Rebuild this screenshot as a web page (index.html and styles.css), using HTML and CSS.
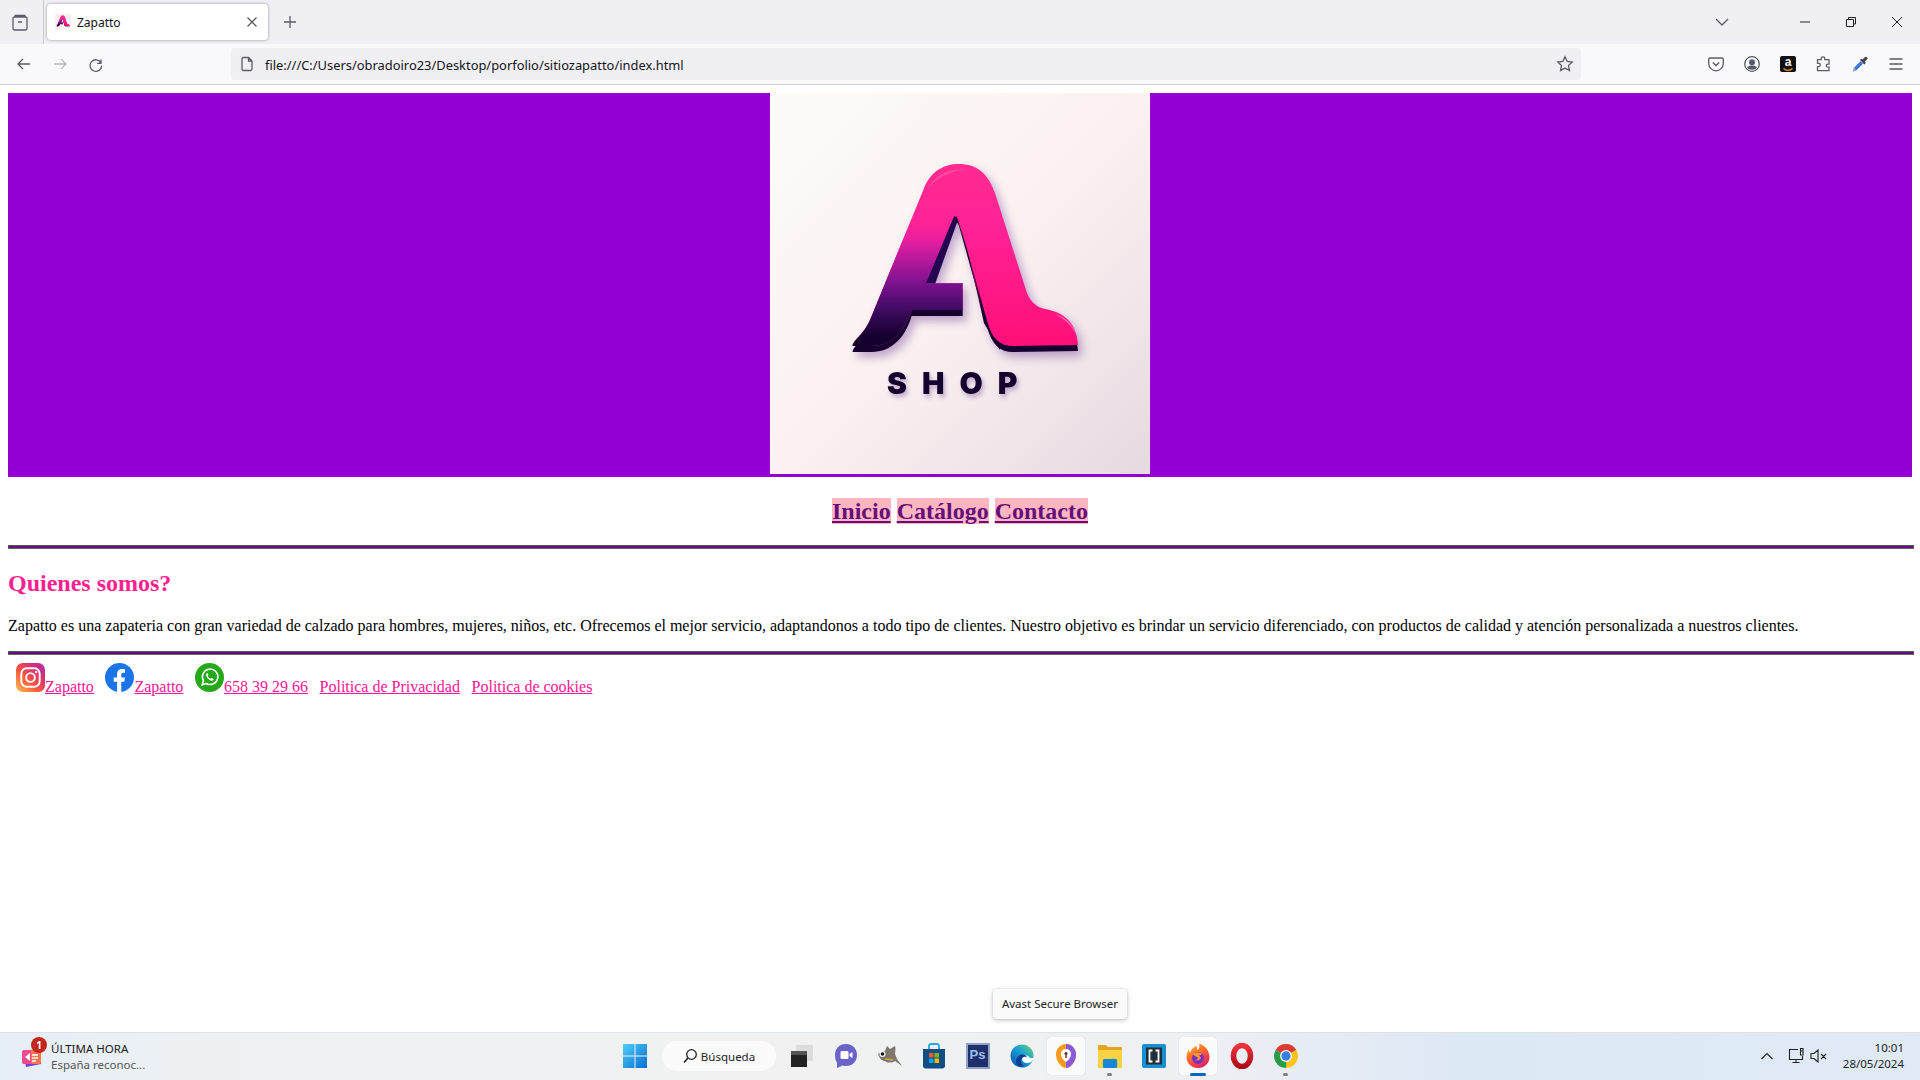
FILE: index.html
```html
<!DOCTYPE html>
<html lang="es">
<head>
  <meta charset="UTF-8" />
  <title>Zapatto</title>
  <link rel="stylesheet" href="styles.css">
</head>
<body>

  <!-- barra del navegador -->
  <div class="browser">
    <div class="tabbar">
      <div class="tab-list">
        <svg class="ico" width="20" height="20" viewBox="0 0 20 20"><path d="M4.500 3.500h11M3 6.500C3 5.600 3.600 5 4.500 5h11c.9 0 1.500.6 1.500 1.500v10c0 .9-.6 1.500-1.500 1.500h-11C3.600 18 3 17.400 3 16.500zM8 10h4"/></svg>
      </div>
      <div class="tab">
        <svg class="favicon" width="16" height="16" viewBox="200 150 820 820"><rect x="200" y="150" width="820" height="820" fill="#fbeeee"/><use href="#logo-a"/></svg>
        <span class="tab-title">Zapatto</span>
        <svg class="ico tab-close" width="16" height="16" viewBox="0 0 16 16"><path d="M3.500 3.500l9 9M12.500 3.500l-9 9"/></svg>
      </div>
      <svg class="ico new-tab" width="16" height="16" viewBox="0 0 16 16"><path d="M8 2v12M2 8h12"/></svg>
      <svg class="ico tab-menu" width="16" height="16" viewBox="0 0 16 16"><path d="M2 5l6 6 6-6"/></svg>
      <div class="win-btns">
        <svg class="ico-win" width="12" height="12" viewBox="0 0 12 12"><path d="M1 6h10"/></svg>
        <svg class="ico-win" width="12" height="12" viewBox="0 0 12 12"><path d="M3.500 3V1.500h7V8H9M1.500 3.500h7V10.500h-7z"/></svg>
        <svg class="ico-win" width="12" height="12" viewBox="0 0 12 12"><path d="M1 1l10 10M11 1L1 11"/></svg>
      </div>
    </div>
    <div class="toolbar">
      <button class="tool"><svg class="ico" width="18" height="18" viewBox="0 0 18 18"><path d="M15 9H3M8 4L3 9l5 5"/></svg></button>
      <button class="tool tool-off"><svg class="ico" width="18" height="18" viewBox="0 0 18 18"><path d="M3 9h12M10 4l5 5-5 5"/></svg></button>
      <button class="tool"><svg class="ico" width="18" height="18" viewBox="0 0 18 18"><path d="M14 4.500v3.800h-3.800M14 8a5.800 5.800 0 1 0 .6 2.500"/></svg></button>
      <div class="urlbar">
        <svg class="ico" width="16" height="16" viewBox="0 0 16 16"><path d="M3 3c0-.8.6-1.500 1.500-1.500H9.500L13 5v8c0 .8-.6 1.500-1.500 1.500h-7C3.600 14.500 3 13.800 3 13zM9.500 1.500V5H13"/></svg>
        <span class="url">file:///C:/Users/obradoiro23/Desktop/porfolio/sitiozapatto/index.html</span>
        <svg class="ico star" width="18" height="18" viewBox="0 0 18 18"><path d="M9 1.800l2.200 4.700 5 .6-3.700 3.500 1 5L9 13.100l-4.500 2.500 1-5L1.800 7.100l5-.6z"/></svg>
      </div>
      <div class="tool-right">
        <button class="tool"><svg class="ico" width="18" height="18" viewBox="0 0 18 18"><path d="M3 3h12c.8 0 1.300.5 1.300 1.300v4.200A7.300 7.300 0 0 1 9 15.800a7.300 7.300 0 0 1-7.300-7.300V4.300C1.700 3.500 2.200 3 3 3zM5.800 7.500L9 10.500l3.200-3"/></svg></button>
        <button class="tool"><svg class="ico" width="18" height="18" viewBox="0 0 18 18"><circle cx="9" cy="9" r="7.300"/><circle class="solid" cx="9" cy="7.300" r="3"/><path class="solid" d="M4 12.500c1-1.500 3-2 5-2s4 .5 5 2c-1.200 1.500-3 2.200-5 2.200s-3.800-.7-5-2.200z"/></svg></button>
        <button class="tool"><span class="amazon">a<svg width="10" height="4" viewBox="0 0 10 4"><path d="M.5.500C3 3 7 3 9.500.5" fill="none" stroke="#f90" stroke-width="1.200"/></svg></span></button>
        <button class="tool"><svg class="ico" width="18" height="18" viewBox="0 0 18 18"><path d="M8 1.800c1.200 0 1.800.9 1.800 1.800v1H14v4.600h-1c-1 0-1.700.6-1.700 1.500s.7 1.500 1.700 1.500h1v3.400H2.500v-4h1.200c1 0 1.700-.6 1.700-1.500S4.700 8.400 3.700 8.400H2.500V4.600h3.700v-1c0-.9.600-1.800 1.800-1.800z"/></svg></button>
        <button class="tool"><svg width="18" height="18" viewBox="0 0 18 18"><path d="M2 16.500l1-3.800 6.500-6.500 2.500 2.500-6.500 6.500z" fill="#3c78d8"/><path d="M2 16.500l1-3.800 2 2z" fill="#aab"/><path d="M9 5l1.500-1.500 1.200 1 2-2.200c.7-.7 1.800-.7 2.400 0s.6 1.700-.1 2.300l-2.200 2 1 1.300L13.300 9.500z" fill="#45464f"/></svg></button>
        <button class="tool"><svg class="ico" width="18" height="18" viewBox="0 0 18 18"><path d="M2.500 4h13M2.500 9h13M2.500 14h13"/></svg></button>
      </div>
    </div>
  </div>

  <!-- pagina -->
  <div class="page">
    <header class="site-header">
      <svg class="logo" width="380" height="381" viewBox="30 9 1140 1143">
        <defs>
          <linearGradient id="bg1" x1="0" y1="0" x2="1" y2="1">
            <stop offset="0" stop-color="#fcfbf7"/>
            <stop offset=".5" stop-color="#fbf1f1"/>
            <stop offset="1" stop-color="#e6dae1"/>
          </linearGradient>
          <linearGradient id="pinkBody" x1="0" y1="0" x2="0" y2="1">
            <stop offset="0" stop-color="#ff2a90"/>
            <stop offset=".35" stop-color="#ff2296"/>
            <stop offset="1" stop-color="#ff0f78"/>
          </linearGradient>
          <linearGradient id="darkLeg" gradientUnits="userSpaceOnUse" x1="0" y1="380" x2="0" y2="740">
            <stop offset="0" stop-color="#ff2296" stop-opacity="0"/>
            <stop offset=".22" stop-color="#e01ea2"/>
            <stop offset=".55" stop-color="#7d1290"/>
            <stop offset=".78" stop-color="#3e0a60"/>
            <stop offset="1" stop-color="#14002e"/>
          </linearGradient>
          <linearGradient id="innerEdge" gradientUnits="userSpaceOnUse" x1="0" y1="385" x2="0" y2="660">
            <stop offset="0" stop-color="#f01a86"/>
            <stop offset=".55" stop-color="#8c0f5e"/>
            <stop offset="1" stop-color="#16002f"/>
          </linearGradient>
          <path id="a-body" d="M278 765C285 745 310 735 330 690L490 300C510 245 550 222 597 222C650 222 685 250 705 310L795 590C805 630 825 650 855 657C915 668 950 700 954 765L760 768C720 768 695 745 682 695L597 390C592 376 585 376 578 390L498 580H608V660H455C435 725 395 768 335 768H278Z"/>
          <g id="logo-a">
            <use href="#a-body" y="18" fill="#16002f"/>
            <path d="M590 380L625 490 672 700 720 780 740 700 640 400Z" fill="url(#innerEdge)"/>
            <use href="#a-body" fill="url(#pinkBody)"/>
            <path d="M278 765C285 745 310 735 330 690L490 300 C510 270 540 340 578 390L498 580H608V660H455C435 725 395 768 335 768H278Z" fill="url(#darkLeg)"/>
            <path d="M583 378L498 580H526L592 395Z" fill="#230552"/>
            <path d="M500 298C530 250 570 234 620 240 575 240 530 262 500 298Z" fill="#ff6bb0" opacity=".5"/>
            <path d="M885 672C915 680 940 700 948 735 935 705 912 688 885 672Z" fill="#ff6bb0" opacity=".8"/>
          </g>
        </defs>
        <rect x="30" y="9" width="1140" height="1143" fill="url(#bg1)"/>
        <use class="logo-shadow" href="#logo-a"/>
        <text class="logo-shop" x="381" y="911">SHOP</text>
      </svg>
    </header>

    <nav class="menu">
      <a href="#">Inicio</a>
      <a href="#">Catálogo</a>
      <a href="#">Contacto</a>
    </nav>

    <hr>

    <section class="about">
      <h2>Quienes somos?</h2>
      <p>Zapatto es una zapateria con gran variedad de calzado para hombres, mujeres, niños, etc. Ofrecemos el mejor servicio, adaptandonos a todo tipo de clientes. Nuestro objetivo es brindar un servicio diferenciado, con productos de calidad y atención personalizada a nuestros clientes.</p>
    </section>

    <hr>

    <footer class="site-footer">
      <span class="foot-item">
        <svg class="social" width="29" height="29" viewBox="0 0 30 30">
          <defs>
            <linearGradient id="igGrad" x1="0" y1="1" x2="1" y2="0">
              <stop offset="0" stop-color="#fdc04f"/>
              <stop offset=".4" stop-color="#f9583f"/>
              <stop offset=".75" stop-color="#d62e78"/>
              <stop offset="1" stop-color="#a82fb4"/>
            </linearGradient>
          </defs>
          <rect width="30" height="30" rx="7" fill="url(#igGrad)"/>
          <rect x="5.500" y="5.500" width="19" height="19" rx="5.500" fill="none" stroke="#fff" stroke-width="2"/>
          <circle cx="15" cy="15" r="4.500" fill="none" stroke="#fff" stroke-width="2"/>
          <circle cx="20.800" cy="9.200" r="1.300" fill="#fff"/>
        </svg><a href="#">Zapatto</a>
      </span>
      <span class="foot-item">
        <svg class="social" width="29" height="29" viewBox="0 0 30 30">
          <circle cx="15" cy="15" r="15" fill="#1b74e8"/>
          <path d="M12.500 30V19.500H9V15h3.500v-3.200c0-3.600 2.100-5.500 5.300-5.500 1.500 0 2.900.3 2.900.3v3.400H19c-1.700 0-2.200 1-2.200 2.100V15h3.800l-.6 4.500h-3.200V30z" fill="#fff"/>
        </svg><a href="#">Zapatto</a>
      </span>
      <span class="foot-item">
        <svg class="social" width="29" height="29" viewBox="0 0 30 30">
          <circle cx="15" cy="15" r="15" fill="#26a81a"/>
          <path d="M7.500 22.500l1.200-4.300a8 8 0 1 1 3 3z" fill="none" stroke="#fff" stroke-width="1.600"/>
          <path d="M12.300 10.500c-.7.500-1 1.300-.8 2.200.5 2.500 2.800 5 5.500 5.600.9.200 1.800-.2 2.200-1 .2-.4 0-.7-.3-.9l-1.500-.8c-.3-.1-.6 0-.8.200l-.5.600c-1.300-.5-2.400-1.600-3-2.900l.5-.5c.2-.2.300-.5.200-.8l-.7-1.500c-.2-.4-.5-.4-.8-.2z" fill="#fff"/>
        </svg><a href="#">658 39 29 66</a>
      </span>
      <span class="foot-item"><a href="#">Politica de Privacidad</a></span>
      <span class="foot-item"><a href="#">Politica de cookies</a></span>
    </footer>
  </div>

  <div class="tooltip">Avast Secure Browser</div>

  <!-- barra de tareas -->
  <div class="taskbar">
    <div class="news">
      <div class="news-icon">
        <svg width="24" height="22" viewBox="0 0 24 22">
          <path d="M3 6l15-2 3 13-15 3z" fill="#7a3fd8"/>
          <rect x="2" y="3" width="19" height="14" rx="2" fill="#ee4a8e"/>
          <rect x="11" y="3" width="10" height="14" rx="2" fill="#f7774d"/>
          <path d="M5 10l5-4v8z" fill="#fff"/>
          <path d="M12 8h6M12 11h6M12 14h4" stroke="#fff" stroke-width="1.300"/>
        </svg>
        <span class="badge">1</span>
      </div>
      <div class="news-text">
        <div class="news-title">ÚLTIMA HORA</div>
        <div class="news-sub">España reconoc...</div>
      </div>
    </div>

    <div class="apps">
      <div class="app">
        <svg width="24" height="24" viewBox="0 0 24 24">
          <defs><linearGradient id="winG" x1="0" y1="0" x2="1" y2="1"><stop offset="0" stop-color="#4fcdf7"/><stop offset="1" stop-color="#0a6fd0"/></linearGradient></defs>
          <path d="M0 0h11.500v11.500H0zM12.500 0H24v11.500H12.500zM0 12.500h11.500V24H0zM12.500 12.500H24V24H12.500z" fill="url(#winG)"/>
        </svg>
      </div>
      <div class="search">
        <svg width="16" height="16" viewBox="0 0 16 16"><circle cx="9.500" cy="6.500" r="4.800" fill="none" stroke="#222" stroke-width="1.300"/><path d="M6 10l-4 4.500" stroke="#222" stroke-width="1.600"/></svg>
        <span>Búsqueda</span>
      </div>
      <div class="app">
        <svg width="24" height="24" viewBox="0 0 24 24"><rect x="6" y="1" width="17" height="16" fill="#dcdcdc"/><rect x="1" y="7" width="16" height="16" fill="#222"/><rect x="1" y="7" width="16" height="4" fill="#555"/></svg>
      </div>
      <div class="app">
        <svg width="24" height="26" viewBox="0 0 24 26"><path d="M12 1c6.500 0 11 4.500 11 11s-4.500 11-11 11c-1.200 0-2.500-.2-3.500-.6L3 25v-5.500C1.700 17.500 1 15 1 12 1 5.500 5.500 1 12 1z" fill="#6c63c9"/><rect x="6.500" y="8" width="8" height="8" rx="1.500" fill="#fff"/><path d="M15.500 11l3-2v6l-3-2z" fill="#fff"/></svg>
      </div>
      <div class="app">
        <svg width="26" height="22" viewBox="0 0 26 22"><path d="M1 9c2-2 5-3 7-3l2-5 3 3 5-3c1 3 0 6 0 8l2 5 5 7-7-5c-3 2-8 2-10 0-3 0-5-2-7-7z" fill="#7e776c"/><circle cx="5.500" cy="9" r="3" fill="#fff"/><circle cx="5.500" cy="9" r="1.800" fill="#111"/><path d="M8 14l8 1" stroke="#d9a441" stroke-width="1.500"/></svg>
      </div>
      <div class="app">
        <svg width="24" height="26" viewBox="0 0 24 26"><path d="M7 7V3c0-1 .7-2 2-2h6c1.300 0 2 1 2 2v4" fill="none" stroke="#2aa5e0" stroke-width="1.800"/><path d="M1 6h22v17c0 1.500-1 2.500-2.500 2.500h-17C2 25.500 1 24.500 1 23z" fill="#134d86"/><rect x="7" y="10" width="4.500" height="4.500" fill="#ef5a2a"/><rect x="12.500" y="10" width="4.500" height="4.500" fill="#7fba00"/><rect x="7" y="15.500" width="4.500" height="4.500" fill="#00a4ef"/><rect x="12.500" y="15.500" width="4.500" height="4.500" fill="#ffb900"/></svg>
      </div>
      <div class="app">
        <div class="ps-icon">Ps</div>
      </div>
      <div class="app">
        <svg width="24" height="24" viewBox="0 0 24 24">
          <defs><linearGradient id="edgeG" x1="0" y1="1" x2="1" y2="0"><stop offset="0" stop-color="#0b4fa8"/><stop offset=".55" stop-color="#1aa0d8"/><stop offset="1" stop-color="#6ad86a"/></linearGradient></defs>
          <circle cx="12" cy="12" r="11.500" fill="url(#edgeG)"/>
          <path d="M24 14c-1 3-4 5-7 5-3 0-5-2-5-4s2-3.500 4-3.500c1.800 0 3.500 1 3.500 2.500h4.400" fill="#fff"/>
          <path d="M8 22c-3-3-3-9 2-11 3-1 6 0 7 2-3-1-6 1-6 4 0 2 1 4 3 5-2 1-4 1-6 0z" fill="#0a3f94"/>
        </svg>
      </div>
      <div class="app app-hl">
        <svg width="24" height="26" viewBox="0 0 24 26"><path d="M12 1c5.500 0 9 4 10 9 .6 6-4 15-10 15S1.400 16 2 10C3 5 6.500 1 12 1z" fill="#f59a1c"/><path d="M12 1c5.500 0 9 4 10 9 .6 6-4 15-10 15z" fill="#8a5ad8"/><path d="M12 6c3 0 5 2 5 5s-2 6-5 8c-3-2-5-5-5-8s2-5 5-5z" fill="#fff"/><circle cx="12" cy="10.500" r="1.500" fill="#534"/><rect x="11.300" y="11" width="1.400" height="4" fill="#534"/></svg>
      </div>
      <div class="app app-open">
        <svg width="24" height="24" viewBox="0 0 24 24"><path d="M0 2c0-.6.400-1 1-1h7l2 2h13c.6 0 1 .4 1 1v4H0z" fill="#e5a51d"/><path d="M0 6h24v17c0 .6-.4 1-1 1H1c-.6 0-1-.4-1-1z" fill="#fbd245"/><rect x="5" y="15" width="14" height="9" rx="1" fill="#1788d6"/></svg>
      </div>
      <div class="app">
        <svg width="24" height="24" viewBox="0 0 24 24"><rect width="24" height="24" rx="2" fill="#1a8fd0"/><rect x="4" y="3.500" width="16" height="17" fill="#22303c"/><path d="M10.500 6.500H7.500v11h3M13.500 6.500h3v11h-3" fill="none" stroke="#fff" stroke-width="1.800"/></svg>
      </div>
      <div class="app app-hl app-active">
        <svg width="26" height="26" viewBox="0 0 26 26">
          <defs><linearGradient id="foxG" x1="0" y1="0" x2=".6" y2="1"><stop offset="0" stop-color="#ffc829"/><stop offset=".5" stop-color="#ff6a2a"/><stop offset="1" stop-color="#e3245f"/></linearGradient></defs>
          <path d="M13 25C6 25 1.500 20 1.500 14c0-3 1-5.500 2.500-7.500 0 1.500.4 2.500 1.200 3C6 6.500 8.500 4 12 3c-.6 2 0 3.500 1 4 1.500-2 1.800-4.500 1-6.500 5 1.500 10.500 6.500 10.500 13.500C24.500 20 20 25 13 25z" fill="url(#foxG)"/>
          <circle cx="13" cy="15" r="6" fill="#7a2fc4"/>
          <path d="M8 11c3-2 7-2 9 0-1 1-2 1-3 1l2 3c-1 2-4 3-6 2 2 0 3-1 3-2s-3-1-5-4z" fill="#ff9a2a"/>
        </svg>
      </div>
      <div class="app">
        <svg width="24" height="26" viewBox="0 0 24 26">
          <defs><linearGradient id="opG" x1="0" y1="0" x2="0" y2="1"><stop offset="0" stop-color="#f0323a"/><stop offset="1" stop-color="#b00b1a"/></linearGradient></defs>
          <ellipse cx="12" cy="13" rx="8.500" ry="10.500" fill="none" stroke="url(#opG)" stroke-width="5.500"/>
        </svg>
      </div>
      <div class="app app-open">
        <svg width="26" height="26" viewBox="0 0 24 24">
          <path d="M12 12L2.470 6.500A11 11 0 0 1 21.530 6.500Z" fill="#de3b30"/>
          <path d="M12 12L21.530 6.500A11 11 0 0 1 12 23Z" fill="#fcc419"/>
          <path d="M12 12L12 23A11 11 0 0 1 2.470 6.500Z" fill="#2b9a46"/>
          <circle cx="12" cy="12" r="5.500" fill="#fff"/>
          <circle cx="12" cy="12" r="4.300" fill="#3b7de8"/>
        </svg>
      </div>
    </div>

    <div class="tray">
      <svg class="tray-ico tray-up" width="14" height="14" viewBox="0 0 14 14"><path d="M1.500 10L7 4.500l5.500 5.500"/></svg>
      <svg class="tray-ico tray-net" width="18" height="18" viewBox="0 0 18 18"><path d="M10 2.500H1.500v10h13V9M4.500 15.500h7M8 12.500v3M12.500 1.500h2.500v6.500h-2.500zM12.500 4h2.500"/></svg>
      <svg class="tray-ico" width="18" height="14" viewBox="0 0 18 14"><path d="M1 4.500h3L8 1v12L4 9.500H1zM11 5l5 5M16 5l-5 5"/></svg>
      <div class="clock">
        <div>10:01</div>
        <div>28/05/2024</div>
      </div>
    </div>
  </div>

</body>
</html>
```

FILE: styles.css
```css
html, body {
  margin: 0;
  height: 100%;
}
body {
  display: flex;
  flex-direction: column;
  height: 1080px;
  overflow: hidden;
  font-family: 'Liberation Serif', serif;
  background-color: #fff;
  position: relative;
}

/* navegador */
.browser {
  font-family: 'Noto Sans', sans-serif;
  color: #15141a;
}
.ico {
  fill: none;
  stroke: #5b5b66;
  stroke-width: 1.3;
  flex: none;
}
.ico .solid {
  fill: #5b5b66;
  stroke: none;
}
.tabbar {
  height: 44px;
  background-color: #f0f0f4;
  display: flex;
  align-items: center;
}
.tab-list {
  width: 33px;
  height: 44px;
  padding-left: 10px;
  border-right: 1px solid #c8c8cc;
  display: flex;
  align-items: center;
  margin-right: 3px;
}
.tab {
  width: 221px;
  height: 36px;
  background-color: #fff;
  border-radius: 4px;
  box-shadow: 0 0 3px rgba(0, 0, 0, 0.4);
  display: flex;
  align-items: center;
  padding: 0 8px;
  box-sizing: border-box;
}
.tab-title {
  font-size: 12px;
  margin-left: 6px;
  flex: 1;
}
.favicon {
  flex: none;
}
.new-tab {
  margin-left: 14px;
}
.tab-menu {
  margin-left: auto;
  stroke: #5b5b66;
}
.win-btns {
  display: flex;
  gap: 34px;
  margin-left: 69px;
  margin-right: 17px;
}
.ico-win {
  fill: none;
  stroke: #222;
  stroke-width: 1;
  width: 12px;
}
.toolbar {
  height: 40px;
  background-color: #f9f9fb;
  border-bottom: 1px solid #cfcfd8;
  display: flex;
  align-items: center;
  padding-left: 6px;
}
.tool {
  width: 36px;
  height: 32px;
  border: none;
  background: none;
  padding: 0;
  display: flex;
  align-items: center;
  justify-content: center;
}
.tool-off .ico {
  stroke: #b8b8bf;
}
.urlbar {
  width: 1350px;
  height: 32px;
  margin-left: 117px;
  background-color: #f0f0f4;
  border-radius: 4px;
  display: flex;
  align-items: center;
  padding: 0 7px 0 8px;
  box-sizing: border-box;
}
.url {
  font-size: 12.9px;
  margin-left: 10px;
  margin-top: 2px;
  flex: 1;
}
.tool-right {
  display: flex;
  margin-left: 117px;
}
.amazon {
  width: 16px;
  height: 16px;
  background-color: #111;
  border-radius: 2px;
  color: #fff;
  font-family: 'Liberation Sans', sans-serif;
  font-weight: bold;
  font-size: 12px;
  line-height: 12px;
  display: flex;
  flex-direction: column;
  align-items: center;
}
.amazon svg {
  display: block;
}

/* pagina */
.page {
  flex: 1;
  padding: 8px;
  min-height: 0;
}
.site-header {
  background-color: #9400d3;
  text-align: center;
  height: 384px;
}
.logo {
  vertical-align: top;
}
.logo-shadow {
  filter: drop-shadow(12px 16px 14px rgba(80, 20, 130, 0.35));
}
.logo-shop {
  font-family: Inter, sans-serif;
  font-weight: 900;
  font-size: 90px;
  letter-spacing: 45px;
  fill: #15012e;
  filter: drop-shadow(6px 10px 6px rgba(80, 20, 130, 0.3));
}
.menu {
  text-align: center;
  margin-top: 21px;
  margin-bottom: 20px;
  font-size: 24px;
  font-weight: bold;
}
.menu a {
  color: #660f7a;
  background-color: #ffb6c1;
}
hr {
  box-sizing: content-box;
  width: 100%;
  height: 2px;
  margin: 0;
  background-color: #660f7a;
  border: 1px solid #555;
  border-bottom-color: #666;
}
.about {
  margin-bottom: 16px;
}
.about h2 {
  color: #ff1f8e;
  font-size: 24px;
  margin: 21px 0 20px;
}
.about p {
  font-size: 16px;
  color: #000;
  margin: 0;
}
.site-footer {
  display: flex;
  align-items: baseline;
  gap: 11.6px;
  padding: 8px 8px 0;
  font-size: 16px;
}
.site-footer a {
  color: #ff1493;
}
.social {
  vertical-align: baseline;
}

/* tooltip */
.tooltip {
  position: absolute;
  left: 993px;
  top: 989px;
  width: 134px;
  height: 30px;
  background-color: #fafafa;
  border-radius: 4px;
  box-shadow: 0 1px 4px rgba(0, 0, 0, 0.3);
  font-family: 'Noto Sans', sans-serif;
  font-size: 11.5px;
  line-height: 30px;
  text-align: center;
  color: #222;
}

/* barra de tareas */
.taskbar {
  height: 48px;
  flex: none;
  box-sizing: border-box;
  padding-bottom: 1px;
  border-top: 1px solid #dde2e8;
  background: linear-gradient(90deg, #e6eef6 0%, #eef1f3 12%, #f1f1f1 40%, #eef0f3 62%, #dde8f5 76%, #dfeaf6 100%);
  display: grid;
  grid-template-columns: 1fr auto 1fr;
  align-items: center;
  font-family: 'Noto Sans', sans-serif;
}
.news {
  display: flex;
  align-items: center;
  padding-left: 20px;
}
.news-icon {
  position: relative;
  width: 24px;
  height: 22px;
  margin-right: 7px;
  margin-top: 4px;
}
.news-text {
  margin-top: 2px;
}
.badge {
  position: absolute;
  left: 11px;
  top: -10px;
  width: 16px;
  height: 16px;
  border-radius: 50%;
  background-color: #c4261d;
  color: #fff;
  font-size: 10px;
  font-weight: bold;
  line-height: 16px;
  text-align: center;
}
.news-title {
  font-size: 11.5px;
  line-height: 16px;
  color: #1a1a1a;
}
.news-sub {
  font-size: 11.5px;
  line-height: 16px;
  color: #555;
}
.apps {
  display: flex;
  align-items: center;
}
.app {
  width: 44px;
  height: 40px;
  display: flex;
  align-items: center;
  justify-content: center;
  position: relative;
}
.app-hl::before {
  content: "";
  position: absolute;
  left: 3px;
  top: 1px;
  width: 38px;
  height: 38px;
  background-color: #fbfbfb;
  border-radius: 4px;
  box-shadow: 0 0 1px rgba(0, 0, 0, 0.2);
}
.app svg, .app .ps-icon {
  position: relative;
}
.app-open::after {
  content: "";
  position: absolute;
  left: 19px;
  bottom: 0;
  width: 5px;
  height: 3px;
  border-radius: 2px;
  background-color: #808080;
}
.app-active::after {
  content: "";
  position: absolute;
  left: 14px;
  bottom: 0;
  width: 16px;
  height: 3px;
  border-radius: 2px;
  background-color: #0067c0;
}
.search {
  width: 114px;
  height: 30px;
  margin: 0 4px 0 5px;
  background-color: #fbfbfb;
  border-radius: 15px;
  display: flex;
  align-items: center;
  justify-content: center;
  gap: 3px;
  font-size: 11.5px;
  color: #222;
}
.ps-icon {
  width: 24px;
  height: 26px;
  box-sizing: border-box;
  background-color: #1f2f6b;
  border: 2px solid #8ea3c6;
  color: #9bc1ee;
  font-family: 'Liberation Sans', sans-serif;
  font-size: 13px;
  font-weight: bold;
  line-height: 20px;
  text-align: center;
}
.tray {
  display: flex;
  align-items: center;
  justify-content: flex-end;
  padding-right: 16px;
}
.tray-ico {
  fill: none;
  stroke: #222;
  stroke-width: 1.100;
  margin-right: 9px;
}
.tray-up {
  margin-right: 14px;
}
.tray-net {
  margin-right: 4px;
}
.clock {
  margin-left: 6px;
  font-size: 11.5px;
  line-height: 16px;
  text-align: right;
  color: #222;
}
```
